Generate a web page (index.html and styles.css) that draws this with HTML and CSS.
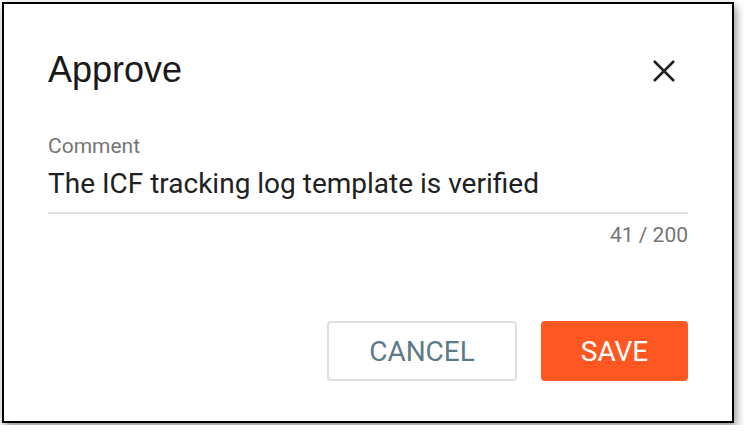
FILE: index.html
```html
<!DOCTYPE html>
<html lang="en">
<head>
    <meta charset="UTF-8">
    <title>Approve</title>
    <link rel="stylesheet" href="styles.css">
</head>
<body>
    <div class="dialog">
        <div class="dialog-header">
            <h1 class="dialog-title">Approve</h1>
            <button class="close-btn" aria-label="Close">
                <svg width="24" height="24" viewBox="0 0 24 24">
                    <path d="M2 2 L22 22 M22 2 L2 22" stroke="#222" stroke-width="2.6" fill="none"/>
                </svg>
            </button>
        </div>
        <div class="field">
            <label class="field-label" for="comment">Comment</label>
            <div class="field-value" id="comment">The ICF tracking log template is verified</div>
            <div class="field-counter">41 / 200</div>
        </div>
        <div class="dialog-actions">
            <button class="btn btn-cancel">CANCEL</button>
            <button class="btn btn-save">SAVE</button>
        </div>
    </div>
</body>
</html>
```

FILE: styles.css
```css
body {
    margin: 0;
    background-color: #ffffff;
    font-family: Roboto, "Liberation Sans", sans-serif;
}
.dialog {
    box-sizing: border-box;
    width: 732px;
    height: 421px;
    margin: 2px;
    border: 2px solid #000;
    background: #fff;
    box-shadow: 2px 4px 9px rgba(0, 0, 0, 0.45);
    padding: 0 44px;
    display: flex;
    flex-direction: column;
}
.dialog-header {
    display: flex;
    align-items: center;
    justify-content: space-between;
    height: 134px;
}
.dialog-title {
    margin: 0;
    font-family: "Liberation Sans", Arial, sans-serif;
    font-weight: normal;
    font-size: 36px;
    color: #1a1a1a;
    margin-top: -2px;
}
.close-btn {
    border: none;
    background: none;
    padding: 0;
    margin-right: 12px;
    width: 24px;
    height: 24px;
    cursor: pointer;
}
.field {
    display: flex;
    flex-direction: column;
}
.field-label {
    font-size: 21px;
    color: #757575;
    line-height: 24px;
    margin-top: -4px;
}
.field-value {
    font-size: 28px;
    color: #212121;
    line-height: 36px;
    padding-top: 8px;
    padding-bottom: 10px;
    border-bottom: 2px solid #e0e0e0;
}
.field-counter {
    text-align: right;
    font-size: 21px;
    color: #757575;
    line-height: 24px;
    margin-top: 9px;
}
.dialog-actions {
    display: flex;
    justify-content: flex-end;
    gap: 24px;
    margin-top: 74px;
}
.btn {
    font-family: Roboto, sans-serif;
    font-size: 28px;
    height: 60px;
    border-radius: 4px;
    cursor: pointer;
}
.btn-cancel {
    width: 190px;
    background: #fff;
    color: #5e7a87;
    border: 2px solid #e0e0e0;
}
.btn-save {
    width: 147px;
    background: #ff5722;
    color: #fff;
    border: none;
}
```
